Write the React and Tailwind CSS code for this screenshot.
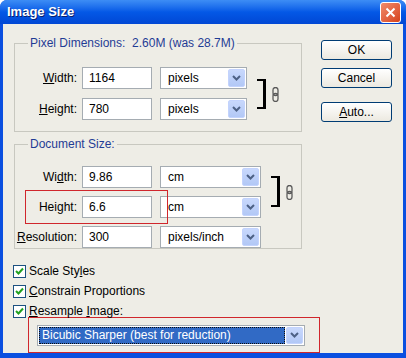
import React from 'react'

const font = { fontFamily: '"Liberation Sans", Arial, sans-serif' }

const Arrow = () => (
  <div className="w-[17px] h-full border border-[#c3d3fd] bg-gradient-to-b from-[#c8d8fc] to-[#b2c8f6] flex items-center justify-center rounded-[2px]">
    <svg width="9" height="6" viewBox="0 0 9 6">
      <path d="M1 1 L4.5 4.5 L8 1" fill="none" stroke="#4d6185" strokeWidth="2" />
    </svg>
  </div>
)

const Select = ({ value, width }) => (
  <div className={`${width} h-[22px] border border-[#a5acb2] bg-white flex items-center p-[1px]`}>
    <span className="flex-1 pl-[6px] text-[12px] text-black">{value}</span>
    <Arrow />
  </div>
)

const Input = ({ value }) => (
  <div className="w-[70px] h-[22px] border border-[#a5acb2] bg-white flex items-center pl-[6px] text-[12px] text-black">
    {value}
  </div>
)

const Label = ({ children }) => (
  <span className="w-[67px] text-right pr-[5px] text-[12px] text-black">{children}</span>
)

const Chain = () => (
  <svg width="7" height="15" viewBox="0 0 7 15">
    <rect x="1" y="0.5" width="5" height="8" rx="2.5" fill="none" stroke="#5a5a5a" strokeWidth="1.3" />
    <rect x="1" y="6.5" width="5" height="8" rx="2.5" fill="none" stroke="#5a5a5a" strokeWidth="1.3" />
  </svg>
)

const Bracket = ({ h }) => (
  <div className={`w-[9px] ${h} border-t-[2px] border-r-[3px] border-b-[2px] border-black`} />
)

const Check = ({ label }) => (
  <div className="flex items-center h-[20px]">
    <div className="w-[13px] h-[13px] border border-[#1c5180] bg-white flex items-center justify-center">
      <svg width="9" height="8" viewBox="0 0 9 8">
        <path d="M1 4 L3.5 6.5 L8 1.5" fill="none" stroke="#21a121" strokeWidth="2" />
      </svg>
    </div>
    <span className="ml-[3px] text-[12px] text-black">{label}</span>
  </div>
)

const Button = ({ children }) => (
  <div className="w-[71px] h-[20px] border border-[#003c74] rounded-[3px] bg-gradient-to-b from-white to-[#ece9e0] flex items-center justify-center text-[12px] text-black">
    {children}
  </div>
)

export default function App() {
  return (
    <div style={font} className="w-[406px] h-[358px] bg-[#0a4fe0] rounded-t-[7px] flex flex-col overflow-hidden">
      <div className="h-[29px] bg-gradient-to-b from-[#3d8df5] via-[#0458e6] to-[#0147d4] flex items-center justify-between pl-[7px] pr-[5px]">
        <span className="text-white font-bold text-[13px] [text-shadow:1px_1px_0_#0a1f6e]">Image Size</span>
        <div className="w-[21px] h-[21px] rounded-[3px] border border-white bg-gradient-to-br from-[#f08a6a] to-[#d64018] flex items-center justify-center">
          <svg width="11" height="11" viewBox="0 0 11 11">
            <path d="M1.5 1.5 L9.5 9.5 M9.5 1.5 L1.5 9.5" stroke="white" strokeWidth="2" />
          </svg>
        </div>
      </div>
      <div className="flex-1 mx-[3px] mb-[5px] bg-[#eeede6] flex">
        <div className="w-[299px] pl-[11px] pt-[11px]">
          <fieldset className="border border-[#c8c8c0] w-[288px] h-[97px]">
            <legend className="ml-[13px] px-[2px] text-[12px] text-[#1f3c95] leading-[16px]">Pixel Dimensions:&nbsp; 2.60M (was 28.7M)</legend>
            <div className="flex items-center mt-[16px]">
              <div className="flex flex-col gap-[9px]">
                <div className="flex items-center">
                  <Label><u>W</u>idth:</Label>
                  <Input value="1164" />
                  <div className="ml-[8px]"><Select value="pixels" width="w-[87px]" /></div>
                </div>
                <div className="flex items-center">
                  <Label><u>H</u>eight:</Label>
                  <Input value="780" />
                  <div className="ml-[8px]"><Select value="pixels" width="w-[87px]" /></div>
                </div>
              </div>
              <div className="ml-[10px]"><Bracket h="h-[30px]" /></div>
              <div className="ml-[6px] mt-[1px]"><Chain /></div>
            </div>
          </fieldset>
          <fieldset className="border border-[#c8c8c0] w-[288px] h-[113px] mt-[4px]">
            <legend className="ml-[13px] px-[2px] text-[12px] text-[#1f3c95] leading-[16px]">Document Size:</legend>
            <div className="flex items-start mt-[14px]">
              <div className="flex flex-col gap-[8px]">
                <div className="flex items-center">
                  <Label>Wi<u>d</u>th:</Label>
                  <Input value="9.86" />
                  <div className="ml-[8px]"><Select value="cm" width="w-[101px]" /></div>
                </div>
                <div className="relative flex items-center">
                  <div className="absolute left-[10px] -top-[6px] w-[143px] h-[34px] border border-[#d0262c]" />
                  <Label>Hei<u>g</u>ht:</Label>
                  <Input value="6.6" />
                  <div className="ml-[8px]"><Select value="cm" width="w-[101px]" /></div>
                </div>
                <div className="flex items-center">
                  <Label><u>R</u>esolution:</Label>
                  <Input value="300" />
                  <div className="ml-[8px]"><Select value="pixels/inch" width="w-[101px]" /></div>
                </div>
              </div>
              <div className="ml-[10px] mt-[10px]"><Bracket h="h-[31px]" /></div>
              <div className="ml-[6px] mt-[19px]"><Chain /></div>
            </div>
          </fieldset>
          <div className="mt-[12px] -ml-[1px] flex flex-col">
            <Check label={<>Scale Sty<u>l</u>es</>} />
            <Check label={<><u>C</u>onstrain Proportions</>} />
            <Check label={<><u>R</u>esample <u>I</u>mage:</>} />
          </div>
          <div className="-mt-[4px] ml-[14px] w-[292px] h-[36px] border border-[#d0262c] flex items-center pl-[8px]">
            <div className="w-[268px] h-[21px] border border-[#a5acb2] bg-white flex items-center p-[1px]">
              <div className="flex-1 h-full bg-[#316ac5] border border-dotted border-[#0c0c0c] flex items-center pl-[2px] text-[12px] text-white">
                Bicubic Sharper (best for reduction)
              </div>
              <div className="ml-[1px] h-full"><Arrow /></div>
            </div>
          </div>
        </div>
        <div className="flex flex-col pl-[19px] pt-[16px] gap-[8px]">
          <Button>OK</Button>
          <Button>Cancel</Button>
          <div className="mt-[6px]"><Button><span><u>A</u>uto...</span></Button></div>
        </div>
      </div>
    </div>
  )
}
